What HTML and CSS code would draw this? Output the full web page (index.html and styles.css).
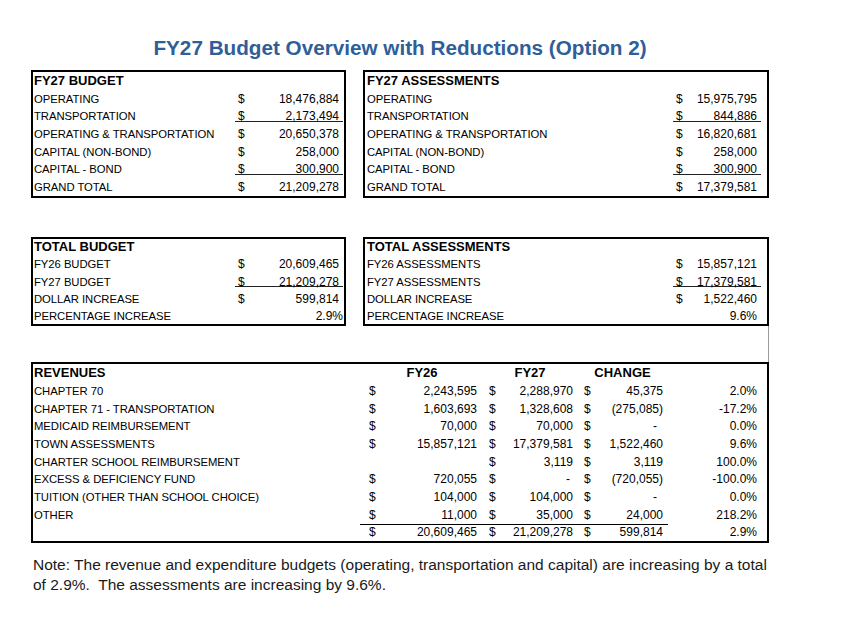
FILE: index.html
```html
<!DOCTYPE html>
<html>
<head>
<meta charset="utf-8">
<link rel="stylesheet" href="styles.css">
</head>
<body>
<div class="page">
  <h1 class="title">FY27 Budget Overview with Reductions (Option 2)</h1>

  <div class="pair">
    <div class="box box-l">
      <div class="row hdr"><span class="lbl">FY27 BUDGET</span><span></span></div>
      <div class="row"><span class="lbl">OPERATING</span><span class="amt"><span>$</span><span>18,476,884</span></span></div>
      <div class="row"><span class="lbl">TRANSPORTATION</span><span class="amt ul"><span>$</span><span>2,173,494</span></span></div>
      <div class="row"><span class="lbl">OPERATING &amp; TRANSPORTATION</span><span class="amt"><span>$</span><span>20,650,378</span></span></div>
      <div class="row"><span class="lbl">CAPITAL (NON-BOND)</span><span class="amt"><span>$</span><span>258,000</span></span></div>
      <div class="row"><span class="lbl">CAPITAL - BOND</span><span class="amt ul"><span>$</span><span>300,900</span></span></div>
      <div class="row"><span class="lbl">GRAND TOTAL</span><span class="amt"><span>$</span><span>21,209,278</span></span></div>
    </div>
    <div class="box box-r">
      <div class="row hdr"><span class="lbl">FY27 ASSESSMENTS</span><span></span></div>
      <div class="row"><span class="lbl">OPERATING</span><span class="amt"><span>$</span><span>15,975,795</span></span></div>
      <div class="row"><span class="lbl">TRANSPORTATION</span><span class="amt ul"><span>$</span><span>844,886</span></span></div>
      <div class="row"><span class="lbl">OPERATING &amp; TRANSPORTATION</span><span class="amt"><span>$</span><span>16,820,681</span></span></div>
      <div class="row"><span class="lbl">CAPITAL (NON-BOND)</span><span class="amt"><span>$</span><span>258,000</span></span></div>
      <div class="row"><span class="lbl">CAPITAL - BOND</span><span class="amt ul"><span>$</span><span>300,900</span></span></div>
      <div class="row"><span class="lbl">GRAND TOTAL</span><span class="amt"><span>$</span><span>17,379,581</span></span></div>
    </div>
  </div>

  <div class="pair pair-mid">
    <div class="box box-l mid">
      <div class="row hdr"><span class="lbl">TOTAL BUDGET</span><span></span></div>
      <div class="row"><span class="lbl">FY26 BUDGET</span><span class="amt"><span>$</span><span>20,609,465</span></span></div>
      <div class="row"><span class="lbl">FY27 BUDGET</span><span class="amt ul"><span>$</span><span>21,209,278</span></span></div>
      <div class="row"><span class="lbl">DOLLAR INCREASE</span><span class="amt"><span>$</span><span>599,814</span></span></div>
      <div class="row"><span class="lbl">PERCENTAGE INCREASE</span><span class="amt pct"><span>2.9%</span></span></div>
    </div>
    <div class="box box-r mid">
      <div class="row hdr"><span class="lbl">TOTAL ASSESSMENTS</span><span></span></div>
      <div class="row"><span class="lbl">FY26 ASSESSMENTS</span><span class="amt"><span>$</span><span>15,857,121</span></span></div>
      <div class="row"><span class="lbl">FY27 ASSESSMENTS</span><span class="amt ul"><span>$</span><span>17,379,581</span></span></div>
      <div class="row"><span class="lbl">DOLLAR INCREASE</span><span class="amt"><span>$</span><span>1,522,460</span></span></div>
      <div class="row"><span class="lbl">PERCENTAGE INCREASE</span><span class="amt pct"><span>9.6%</span></span></div>
    </div>
  </div>

  <div class="connector"></div>

  <div class="rev">
    <div class="row hdr">
      <span class="lbl">REVENUES</span>
      <span class="h h1">FY26</span>
      <span class="h h2">FY27</span>
      <span class="h h3">CHANGE</span>
      <span></span>
    </div>
    <div class="row">
      <span class="lbl">CHAPTER 70</span>
      <span class="c c1"><span>$</span><span>2,243,595</span></span>
      <span class="c c2"><span>$</span><span>2,288,970</span></span>
      <span class="c c3"><span>$</span><span>45,375</span></span>
      <span class="pc">2.0%</span>
    </div>
    <div class="row">
      <span class="lbl">CHAPTER 71 - TRANSPORTATION</span>
      <span class="c c1"><span>$</span><span>1,603,693</span></span>
      <span class="c c2"><span>$</span><span>1,328,608</span></span>
      <span class="c c3"><span>$</span><span>(275,085)</span></span>
      <span class="pc">-17.2%</span>
    </div>
    <div class="row">
      <span class="lbl">MEDICAID REIMBURSEMENT</span>
      <span class="c c1"><span>$</span><span>70,000</span></span>
      <span class="c c2"><span>$</span><span>70,000</span></span>
      <span class="c c3"><span>$</span><span class="dash3">-</span></span>
      <span class="pc">0.0%</span>
    </div>
    <div class="row">
      <span class="lbl">TOWN ASSESSMENTS</span>
      <span class="c c1"><span>$</span><span>15,857,121</span></span>
      <span class="c c2"><span>$</span><span>17,379,581</span></span>
      <span class="c c3"><span>$</span><span>1,522,460</span></span>
      <span class="pc">9.6%</span>
    </div>
    <div class="row">
      <span class="lbl">CHARTER SCHOOL REIMBURSEMENT</span>
      <span class="c c1"></span>
      <span class="c c2"><span>$</span><span>3,119</span></span>
      <span class="c c3"><span>$</span><span>3,119</span></span>
      <span class="pc">100.0%</span>
    </div>
    <div class="row">
      <span class="lbl">EXCESS &amp; DEFICIENCY FUND</span>
      <span class="c c1"><span>$</span><span>720,055</span></span>
      <span class="c c2"><span>$</span><span class="dash2">-</span></span>
      <span class="c c3"><span>$</span><span>(720,055)</span></span>
      <span class="pc">-100.0%</span>
    </div>
    <div class="row">
      <span class="lbl">TUITION (OTHER THAN SCHOOL CHOICE)</span>
      <span class="c c1"><span>$</span><span>104,000</span></span>
      <span class="c c2"><span>$</span><span>104,000</span></span>
      <span class="c c3"><span>$</span><span class="dash3">-</span></span>
      <span class="pc">0.0%</span>
    </div>
    <div class="row">
      <span class="lbl">OTHER</span>
      <span class="c c1"><span>$</span><span>11,000</span></span>
      <span class="c c2"><span>$</span><span>35,000</span></span>
      <span class="c c3"><span>$</span><span>24,000</span></span>
      <span class="pc">218.2%</span>
    </div>
    <div class="row tot">
      <span class="lbl"></span>
      <span class="c c1"><span>$</span><span>20,609,465</span></span>
      <span class="c c2"><span>$</span><span>21,209,278</span></span>
      <span class="c c3"><span>$</span><span>599,814</span></span>
      <span class="pc">2.9%</span>
    </div>
  </div>

  <p class="note">Note: The revenue and expenditure budgets (operating, transportation and capital) are increasing by a total<br>of 2.9%.&nbsp; The assessments are increasing by 9.6%.</p>
</div>
</body>
</html>
```

FILE: styles.css
```css
body {
  margin: 0;
  background: #ffffff;
  font-family: "Liberation Sans", Arial, sans-serif;
  color: #000000;
}

.page {
  padding: 36px 0 0 31px;
  width: 738px;
}

.title {
  margin: 0 0 10px;
  font-size: 20.7px;
  line-height: 24px;
  font-weight: 700;
  color: #2f5e99;
  text-align: center;
}

.pair {
  display: flex;
  gap: 17px;
}

.pair-mid {
  margin-top: 39px;
}

.box {
  border: 2px solid #000;
  box-sizing: border-box;
}

.box-l {
  width: 315px;
  padding-right: 1px;
}

.box-r {
  width: 406px;
  padding-right: 6px;
}

.row {
  display: grid;
  height: 17.7px;
  line-height: 16.7px;
  padding-top: 1px;
  box-sizing: border-box;
  white-space: nowrap;
}

.mid .row {
  height: 17.1px;
  line-height: 16.6px;
  padding-top: 0.5px;
}

.box-l .row {
  grid-template-columns: 1fr 108px;
}

.box-r .row {
  grid-template-columns: 1fr 88px;
}

.lbl {
  font-size: 11.3px;
  letter-spacing: -0.05px;
  padding-left: 1px;
}

.box-r .lbl {
  padding-left: 2px;
}

.hdr .lbl,
.h {
  font-size: 13px;
  font-weight: 700;
  letter-spacing: 0;
}

.amt {
  display: flex;
  justify-content: space-between;
  font-size: 12px;
  padding: 0 4px 0 3px;
}

.amt.pct {
  justify-content: flex-end;
}

.box-l .amt.pct {
  padding-right: 0;
}

.ul {
  background: linear-gradient(#222, #222) left 0 bottom 3px / 100% 1px no-repeat;
}

.connector {
  height: 36px;
  width: 738px;
  box-sizing: border-box;
  border-right: 1px solid #9a9a9a;
}

.rev {
  width: 738px;
  border: 2px solid #000;
  box-sizing: border-box;
}

.rev .row {
  grid-template-columns: 327px 120px 97px 91px 99px;
  height: 17.7px;
  line-height: 16.7px;
}

.h {
  text-align: center;
}

.h1 {
  padding-left: 4px;
}

.h2 {
  padding-left: 3px;
}

.c {
  display: flex;
  justify-content: space-between;
  font-size: 12px;
}

.c1 {
  padding: 0 3px 0 9px;
}

.c2 {
  padding: 0 4px 0 9px;
}

.c3 {
  padding: 0 5px 0 7px;
}

.dash2 {
  padding-right: 3px;
}

.dash3 {
  padding-right: 6px;
}

.pc {
  font-size: 12px;
  text-align: right;
  padding-right: 10px;
}

.tot .c {
  box-shadow: inset 0 1px 0 #000;
}

.note {
  margin: 12px 0 0;
  padding-left: 2px;
  font-size: 15.5px;
  line-height: 20px;
  letter-spacing: 0;
  white-space: nowrap;
  color: #1a1a1a;
}
```
